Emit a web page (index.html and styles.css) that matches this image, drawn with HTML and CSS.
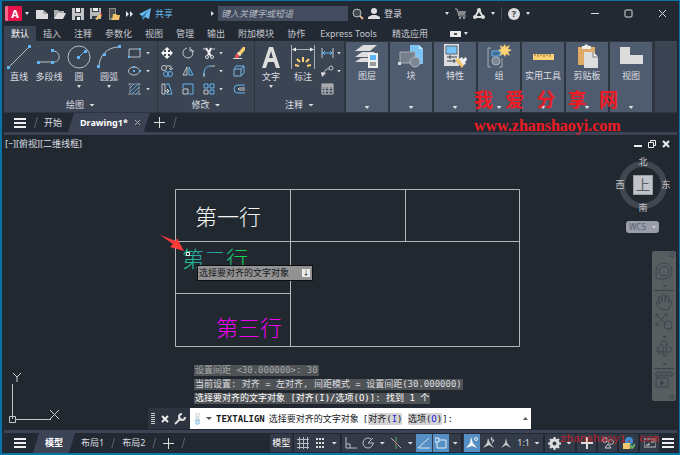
FILE: index.html
```html
<!DOCTYPE html>
<html lang="zh-CN">
<head>
    <meta charset="UTF-8">
    <meta name="viewport" content="width=device-width, initial-scale=1.0">
    <title>Drawing1</title>
    <link rel="stylesheet" href="styles.css">
</head>
<body>
    <header class="titlebar">
        <div class="quick">
            <button class="app" aria-label="A"><span class="logo">A</span><i class="caret"></i></button>
            <button aria-label="新建"><svg width="12" height="12" viewBox="0 0 12 12"><path d="M0 2h7l5 4v5H0z" fill="#dcdcdc"/><path d="M7 2v4h5" fill="#aaa"/></svg></button>
            <button aria-label="打开"><svg width="12" height="12" viewBox="0 0 12 12"><path d="M0 11V2h4l1 1h5v2H3z" fill="#aaa"/><path d="M3 5h9l-3 6H0z" fill="#dcdcdc"/></svg></button>
            <button aria-label="保存"><svg width="12" height="12" viewBox="0 0 12 12"><path d="M0 0h12v12H0z" fill="#c4c4c4"/><path d="M3 0h6v5H3zM3 8h6v4H3z" fill="#35404e"/><path d="M4 0h4v4H4zM5 9h3v3H5z" fill="#eee"/></svg></button>
            <button aria-label="另存为"><svg width="12" height="12" viewBox="0 0 12 12"><path d="M0 0h11v11H0z" fill="#b9b9b9"/><path d="M2 0h7v4H2zM2 8h5v3H2z" fill="#35404e"/><path d="M3 0h5v3H3z" fill="#eee"/><path d="M5 11l5-5 2 2-5 4z" fill="#f3c36b"/><path d="M10 6l1-1 1 1v2z" fill="#e24b4b"/></svg></button>
            <button aria-label="移动"><svg width="12" height="12" viewBox="0 0 12 12"><path d="M1 0h7v12H1z" fill="#8b8b85"/><path d="M2 1h5v9H2z" fill="#4b4f50"/><path d="M5 6h3l1 1h3l-1 5H4z" fill="#f3c36b"/></svg></button>
            <button aria-label="更多"><svg width="7" height="6" viewBox="0 0 7 6"><path d="M0 0l3 3-3 3zM4 0l3 3-3 3z" fill="#e8e8e8"/></svg></button>
            <button class="share"><svg width="12" height="12" viewBox="0 0 12 12"><path d="M0 6L12 0l-2 11-4-2-2 3-1-4z" fill="#69bdf0"/><path d="M3 8l7-6-5 7-1 3z" fill="#28729f"/></svg>共享</button>
        </div>
        <form class="search">
            <i class="caret right"></i>
            <input type="text" placeholder="键入关键字或短语" aria-label="键入关键字或短语">
            <button type="button" aria-label="搜索"><svg width="12" height="12" viewBox="0 0 12 12"><circle cx="5" cy="5" r="4" fill="#454b52" stroke="#bbb"/><path d="M8 8l3 3" stroke="#ddb883" stroke-width="2"/></svg></button>
        </form>
        <button class="login"><svg width="12" height="12" viewBox="0 0 12 12"><circle cx="6" cy="3" r="3" fill="#ddd"/><path d="M0 11V9l4-2h4l4 2v2z" fill="#ddd"/></svg>登录</button>
        <div class="account">
            <i class="caret"></i>
            <button aria-label="商店"><svg width="12" height="12" viewBox="0 0 12 12"><path d="M0 1h2l2 7h7" fill="none" stroke="#aaa"/><path d="M3 3h8l-1 4H4z" fill="#888"/><circle cx="5" cy="10" r="1" fill="#bbb"/><circle cx="9" cy="10" r="1" fill="#bbb"/></svg></button>
            <button aria-label="应用"><svg width="12" height="12" viewBox="0 0 12 12"><path d="M6 2L2 9h8z" fill="none" stroke="#ddd" stroke-width="2"/><circle cx="6" cy="2" r="2" fill="#ddd"/><circle cx="2" cy="9" r="2" fill="#ddd"/><circle cx="10" cy="9" r="2" fill="#ddd"/></svg></button>
            <i class="caret"></i>
            <span class="divider"></span>
            <button class="help" aria-label="帮助">?</button>
            <i class="caret"></i>
        </div>
        <div class="window">
            <button aria-label="最小化"><svg width="9" height="9" viewBox="0 0 9 9"><path d="M1 4.500h8" stroke="#ddd"/></svg></button>
            <button aria-label="最大化"><svg width="9" height="9" viewBox="0 0 9 9"><rect x="1" y="1" width="7" height="7" rx="1" fill="none" stroke="#ddd"/></svg></button>
            <button aria-label="关闭"><svg width="9" height="9" viewBox="0 0 9 9"><path d="M1 1l7 7M8 1L1 8" stroke="#ddd"/></svg></button>
        </div>
    </header>

    <nav class="menu">
        <a href="#" class="active">默认</a>
        <a href="#">插入</a>
        <a href="#">注释</a>
        <a href="#">参数化</a>
        <a href="#">视图</a>
        <a href="#">管理</a>
        <a href="#">输出</a>
        <a href="#">附加模块</a>
        <a href="#">协作</a>
        <a href="#" class="express">Express Tools</a>
        <a href="#">精选应用</a>
        <button class="toggle" aria-label="最小化功能区"><span></span><i class="caret"></i></button>
    </nav>

    <section class="ribbon">
        <div class="panel draw">
            <div class="tools">
                <button class="tool"><svg width="24" height="24" viewBox="0 0 24 24"><path d="M2 22L22 2" stroke="#b9bec5"/><path d="M0 21h3v3H0zM21 0h3v3h-3z" fill="#62b6f0"/></svg>直线</button>
                <button class="tool"><svg width="24" height="24" viewBox="0 0 24 24"><path d="M1 17h16c7 0 7-11-1-11" fill="none" stroke="#b9bec5"/><path d="M0 16h3v3H0zM14 4h3v3h-3zM14 16h3v3h-3z" fill="#62b6f0"/></svg>多段线</button>
                <button class="tool"><svg width="24" height="24" viewBox="0 0 24 24"><circle cx="12" cy="12" r="11" fill="none" stroke="#b9bec5"/><path d="M12 12l6-6" stroke="#62b6f0"/><path d="M10 11h3v3h-3zM17 5h3v3h-3z" fill="#62b6f0"/></svg>圆<i class="caret"></i></button>
                <button class="tool"><svg width="24" height="24" viewBox="0 0 24 24"><path d="M2 22C2 11 10 2 22 2" fill="none" stroke="#b9bec5"/><path d="M0 20h3v3H0zM6 8h3v3H6zM21 0h3v3h-3z" fill="#62b6f0"/></svg>圆弧<i class="caret"></i></button>
                <div class="small pairs">
                    <button aria-label="矩形"><svg width="13" height="12" viewBox="0 0 13 12"><path d="M1 2h11v8H1z" fill="none" stroke="#b9bec5"/><path d="M0 9h2v2H0zM11 1h2v2h-2z" fill="#62b6f0"/></svg></button><i class="caret"></i>
                    <button aria-label="椭圆"><svg width="13" height="12" viewBox="0 0 13 12"><ellipse cx="6" cy="6" rx="5.500" ry="4" fill="none" stroke="#b9bec5"/><path d="M5 5h2v2H5zM5 1h2v2H5zM11 5h2v2h-2z" fill="#62b6f0"/></svg></button><i class="caret"></i>
                    <button aria-label="填充"><svg width="13" height="12" viewBox="0 0 13 12"><path d="M2 0v12M11 0v12M0 1h13M0 11h13" stroke="#858c96"/><path d="M2 5l4-4M2 9l8-8M4 11l7-7M8 11l3-3" stroke="#62a6dc"/></svg></button><i class="caret"></i>
                </div>
            </div>
            <button class="name">绘图<i class="caret wide"></i></button>
        </div>
        <div class="panel modify">
            <div class="tools">
                <div class="small grid">
                    <button aria-label="移动"><svg width="12" height="12" viewBox="0 0 12 12"><path d="M6 0l3 3H7v2h2V3l3 3-3 3V7H7v2h2l-3 3-3-3h2V7H3v2L0 6l3-3v2h2V3H3z" fill="#f2f2f2"/></svg></button>
                    <button aria-label="旋转"><svg width="12" height="12" viewBox="0 0 12 12"><path d="M9 2a5 5 0 1 1-4-1" fill="none" stroke="#c3c7cc"/><path d="M8 0v4h4" fill="none" stroke="#c3c7cc"/></svg></button>
                    <button aria-label="修剪"><svg width="12" height="12" viewBox="0 0 12 12"><path d="M0 2h3M8 2h4" stroke="#c3c7cc"/><path d="M3 1l5 8M8 1L5 8" stroke="#eee" stroke-width="2"/><circle cx="4" cy="10" r="1.500" fill="none" stroke="#ddd"/><circle cx="9" cy="10" r="1.500" fill="none" stroke="#ddd"/></svg></button><i class="caret"></i>
                    <button aria-label="删除"><svg width="12" height="12" viewBox="0 0 12 12"><path d="M4 7l6-7h2v3L7 9z" fill="#fbcf6d"/><path d="M4 6l3 3-2 2H2V9z" fill="#e45151"/><path d="M4 6l3 3 1-1-3-3z" fill="#eee"/><path d="M0 11.500h9" stroke="#ddd"/></svg></button>
                    <button aria-label="复制"><svg width="12" height="12" viewBox="0 0 12 12"><circle cx="3" cy="3" r="2.500" fill="none" stroke="#c3c7cc"/><path d="M5 1h5v3M8 3l2 2 2-2" fill="none" stroke="#c3c7cc"/><circle cx="5" cy="9" r="2.500" fill="none" stroke="#62b6f0"/><circle cx="9" cy="9" r="2.500" fill="none" stroke="#62b6f0"/></svg></button>
                    <button aria-label="镜像"><svg width="12" height="12" viewBox="0 0 12 12"><path d="M5 2v8H1z" fill="none" stroke="#c3c7cc"/><path d="M7 2v8h4z" fill="none" stroke="#62b6f0"/></svg></button>
                    <button aria-label="圆角"><svg width="12" height="12" viewBox="0 0 12 12"><path d="M1 11V7q1-6 7-6" fill="none" stroke="#62b6f0"/><path d="M8 1h4M1 8v4" stroke="#c3c7cc"/></svg></button><i class="caret"></i>
                    <button aria-label="分解"><svg width="12" height="12" viewBox="0 0 12 12"><path d="M1 4l2-3h8v7l-3 3" fill="none" stroke="#62b6f0"/><path d="M8 4l3-3M1 4h7v7H1z" fill="none" stroke="#80b9df"/></svg></button>
                    <button aria-label="拉伸"><svg width="12" height="12" viewBox="0 0 12 12"><path d="M1 1h3v10H1z" fill="none" stroke="#c3c7cc"/><path d="M5 1h3l3 10H5" fill="none" stroke="#62b6f0"/><path d="M4 8h4M6 6l2 2-2 2" fill="none" stroke="#ddd"/></svg></button>
                    <button aria-label="缩放"><svg width="12" height="12" viewBox="0 0 12 12"><path d="M1 5V1h10v10H7" fill="none" stroke="#62b6f0"/><path d="M1 6h5v5H1z" fill="none" stroke="#c3c7cc"/></svg></button>
                    <button aria-label="阵列"><svg width="12" height="12" viewBox="0 0 12 12"><path d="M1 1h4v4H1zM7 1h4v4H7zM7 7h4v4H7z" fill="none" stroke="#62b6f0"/><path d="M1 7h4v4H1z" fill="none" stroke="#c3c7cc"/></svg></button><i class="caret"></i>
                    <button aria-label="偏移"><svg width="12" height="12" viewBox="0 0 12 12"><path d="M12 2H5a4 4 0 0 0 0 8h7" fill="none" stroke="#62b6f0"/><path d="M12 5H6q-2 1 0 2h6" fill="none" stroke="#c3c7cc"/></svg></button>
                </div>
            </div>
            <button class="name">修改<i class="caret wide"></i></button>
        </div>
        <div class="panel annotate">
            <div class="tools">
                <button class="tool"><svg width="24" height="24" viewBox="0 0 24 24"><path d="M3 23L10 2h4l7 21h-4l-2-6H9l-2 6zM10 13h4l-2-7z" fill="#dedede"/></svg>文字<i class="caret"></i></button>
                <button class="tool"><svg width="24" height="24" viewBox="0 0 24 24"><path d="M.5 0v24M23.500 0v24M2 4.500h20" stroke="#a9aeb6"/><path d="M1 4.500l4-2v4zM23 4.500l-4-2v4z" fill="#eee"/><path d="M12 12v5M6 14l3 3M18 14l-3 3M4 20l4 1M20 20l-4 1" stroke="#fbcf6d" stroke-width="2"/></svg>标注</button>
                <div class="small pairs">
                    <button aria-label="线性"><svg width="13" height="12" viewBox="0 0 13 12"><path d="M1 1v10M12 1v10" stroke="#c3c7cc"/><path d="M1 6h11M4 4L2 6l2 2M9 4l2 2-2 2" fill="none" stroke="#62b6f0"/></svg></button><i class="caret"></i>
                    <button aria-label="引线"><svg width="13" height="12" viewBox="0 0 13 12"><circle cx="10" cy="3" r="2" fill="none" stroke="#c3c7cc"/><path d="M8 4Q4 3 3 9" fill="none" stroke="#c3c7cc"/><path d="M0 7l5 1-4 4z" fill="#ddd"/></svg></button><i class="caret"></i>
                    <button aria-label="表格"><svg width="13" height="12" viewBox="0 0 13 12"><path d="M1 1h11v10H1zM1 5h11M1 8h11M4 4v7M8 4v7" fill="none" stroke="#c3c7cc"/><path d="M1 1h11v3H1z" fill="#aaa"/></svg></button>
                </div>
            </div>
            <button class="name">注释<i class="caret wide"></i></button>
        </div>
        <div class="tiles">
            <button class="tile"><svg width="26" height="24" viewBox="0 0 26 24"><path d="M9 1h14l-7 6H1zM8 8h13l-6 5H1zM7 14h12l-4 4H1z" fill="#ddd"/><path d="M8 8l1-1M7 14l1-1" stroke="#38404c"/><path d="M14 9h10v15H14z" fill="#eee"/><path d="M16 11h6v5h-6z" fill="#59b9f6"/><path d="M16 19h6M16 21h6" stroke="#444"/></svg>图层<i class="caret"></i></button>
            <button class="tile"><svg width="26" height="24" viewBox="0 0 26 24"><path d="M12 1h9l4 4v15H12z" fill="#7bc4f4"/><path d="M21 1v4h4" fill="#c6e8fc"/><path d="M2 8h15v11H2z" fill="#747f8e" stroke="#a4abb4"/><circle cx="17" cy="18" r="5" fill="#7c8795" stroke="#b0b5bc"/><path d="M0 18h3v3H0z" fill="#ddd"/></svg>块<i class="caret"></i></button>
            <button class="tile"><svg width="26" height="24" viewBox="0 0 26 24"><path d="M2 0h15v22H2z" fill="#ddd"/><path d="M4 2h11v8H4z" fill="#78c4f6" stroke="#58636f"/><path d="M5 13h10M5 17h10M8 11v4M12 15v4" stroke="#38404c"/><path d="M13 16l4-2 5 7-2 3z" fill="#f4c76a"/><path d="M17 15l3-2 1 2 3-2 1 3-2 2 1 2-3 1z" fill="#eee"/></svg>特性<i class="caret"></i></button>
            <button class="tile"><svg width="26" height="24" viewBox="0 0 26 24"><path d="M5 4H2v19h3M13 23h3V14" fill="none" stroke="#a4abb4"/><path d="M6 7h8v5H6z" fill="#406b90" stroke="#62b6f0"/><circle cx="10" cy="17" r="4" fill="#7c8795" stroke="#b0b5bc"/><path d="M19 0l1 3 4-2-2 4 4 1-4 2 2 4-4-2-1 3-2-3-3 2 1-4-3-2 3-1-1-4 3 2z" fill="#fbd276"/></svg>组<i class="caret"></i></button>
            <button class="tile"><svg width="26" height="24" viewBox="0 0 26 24"><path d="M3 10h21v6H3z" fill="#fbd276"/><path d="M5 10v2M8 10v3M11 10v2M14 10v3M17 10v2M20 10v3" stroke="#8c6c3a"/></svg>实用工具<i class="caret"></i></button>
            <button class="tile"><svg width="26" height="24" viewBox="0 0 26 24"><path d="M4 3h17v18H4z" fill="#dfaa65"/><path d="M8 5V2h2l2-2 3 2h2v3z" fill="#eee"/><path d="M10 8h9l5 5v11H10z" fill="#ddd"/><path d="M19 8v5h5" fill="#f6f6f6" stroke="#7b7b7b"/></svg>剪贴板<i class="caret"></i></button>
            <button class="tile"><svg width="26" height="24" viewBox="0 0 26 24"><path d="M2 3h10v8h13v9H2z" fill="#dcdcdc"/></svg>视图<i class="caret"></i></button>
        </div>
        <div class="watermark">
            <div class="mark"><span>我</span><span>爱</span><span>分</span><span>享</span><span>网</span></div>
            <div class="site">www.zhanshaoyi.com</div>
        </div>
    </section>

    <nav class="tabs files">
        <button class="bars" aria-label="菜单"></button>
        <span class="slash"></span>
        <a href="#">开始</a>
        <a href="#" class="current">Drawing1* <svg width="7" height="7" viewBox="0 0 7 7"><path d="M1 1l5 5M6 1L1 6" stroke="#aaa" stroke-width="1"/></svg></a>
        <button class="plus" aria-label="新图形"></button>
        <span class="slash"></span>
    </nav>

    <main class="canvas">
        <div class="view-head">
            <span>[−][俯视][二维线框]</span>
            <div class="view-buttons">
                <button aria-label="最小化"><svg width="8" height="8" viewBox="0 0 8 8"><path d="M0 6h8" stroke="#eee" stroke-width="2"/></svg></button>
                <button aria-label="还原"><svg width="8" height="8" viewBox="0 0 8 8"><path d="M.5 2.500h5v5h-5zM2.500 2V.5h5v5H6" fill="none" stroke="#eee"/></svg></button>
                <button aria-label="关闭"><svg width="8" height="8" viewBox="0 0 8 8"><path d="M1 1l6 6M7 1L1 7" stroke="#eee" stroke-width="2"/></svg></button>
            </div>
        </div>

        <svg class="drawing" width="361" height="160" viewBox="0 0 361 160">
            <defs>
                <linearGradient id="picked" x1="0" y1="0" x2="1" y2="0">
                    <stop offset="0" stop-color="#1fd088"/>
                    <stop offset=".4" stop-color="#2f92b8"/>
                    <stop offset="1" stop-color="#10e040"/>
                </linearGradient>
            </defs>
            <path d="M15.500 1.500h344v157h-344zM15.500 53.500h344M130.500 1.500v157M245.500 1.500v52M15.500 105.500h115" fill="none" stroke="#b4b7bb"/>
            <text x="35" y="37" fill="#f4f4f4">第一行</text>
            <text x="22" y="79" fill="url(#picked)">第二行</text>
            <text x="56" y="148" fill="#f000f0">第三行</text>
            <path d="M0 47l16 6 1-3 7 13-14-4 3-3z" fill="#fb3a3a"/>
            <path d="M26.500 64.500h3v3h-3z" fill="#212830" stroke="#f4f4f4"/>
        </svg>
        <div class="tip">选择要对齐的文字对象<span class="tip-key">↓</span></div>

        <svg class="ucs" width="56" height="54" viewBox="0 0 56 54">
            <path d="M5.500 11v35M8 46.500h36M2.500 43.500h6v6h-6z" fill="none" stroke="#c5c8cb"/>
            <path d="M6 0l4 4 4-4M10 4v5M43 37l9 9M52 37l-9 9" fill="none" stroke="#d0d2d4"/>
        </svg>

        <div class="compass">
            <span class="north">北</span>
            <span class="west">西</span>
            <span class="top">上</span>
            <span class="east">东</span>
            <span class="south">南</span>
        </div>
        <button class="wcs">WCS <i class="caret"></i></button>
        <div class="navbar">
            <svg width="24" height="150" viewBox="0 0 24 150" fill="none" stroke="#3c454e">
                <circle cx="20" cy="4" r="2"/>
                <path d="M4 20a8 8 0 1 1 8 8H6q-2 0-2-2zM2 39.500h20M2 117.500h20"/>
                <circle cx="12" cy="20" r="5"/>
                <path d="M8 58l-4-6q0-3 3 0l1 1-2-7q1-2 3 1l1 4v-7q2-2 3 0v7l2-6q2-1 2 1l-1 6 2-3q2 0 2 2l-4 8z"/>
                <path d="M4 63l11 11M15 63L4 74M4 66v-3h3M12 63h3v3M4 71v3h3"/>
                <circle cx="16" cy="74" r="4"/><path d="M18 77l3 3"/>
                <path d="M11 105V94H8l4-5 4 5h-2v11zM8 96q-7 2-2 5h12q5-3-2-5M6 98l3 3-3 3"/>
                <path d="M4 121h4v4H4zM10 121h4v4h-4zM16 121h4v4h-4zM4 127h12v9H4z"/>
                <path d="M8 129l5 3-5 3zM10 34h5l-2 2zM10 85h5l-2 2zM10 112h5l-2 2z" fill="#3c454e" stroke="none"/>
                <circle cx="20" cy="146" r="2"/>
            </svg>
        </div>

        <div class="command">
            <div class="history">
                <p class="old">设置间距 &lt;30.000000&gt;: 30</p>
                <p>当前设置: 对齐 = 左对齐, 间距模式 = 设置间距(30.000000)</p>
                <p class="last">选择要对齐的文字对象 [对齐(I)/选项(O)]: 找到 1 个</p>
            </div>
            <div class="prompt">
                <div class="prompt-tools">
                    <span class="grip"></span>
                    <button aria-label="关闭"><svg width="8" height="8" viewBox="0 0 8 8"><path d="M1 1l6 6M7 1L1 7" stroke="#eee" stroke-width="2"/></svg></button>
                    <button aria-label="自定义"><svg width="12" height="12" viewBox="0 0 12 12"><path d="M1 11l6-6" stroke="#ddd" stroke-width="2"/><path d="M8 1a3 3 0 1 0 3 3" fill="none" stroke="#ddd" stroke-width="2"/></svg></button>
                </div>
                <div class="line">
                    <svg width="8" height="12" viewBox="0 0 8 12"><path d="M2 0h3v4H2zM2 5h3v3H2z" fill="none" stroke="#ccd4da"/><path d="M2 7h3v4H2z" fill="none" stroke="#76bdea"/></svg>
                    <i class="caret wide"></i>
                    <b>TEXTALIGN</b>
                    <span>选择要对齐的文字对象</span>
                    <span>[<button>对齐(<em>I</em>)</button> <button>选项(<em>O</em>)</button>]:</span>
                    <i class="caret up"></i>
                </div>
            </div>
        </div>
    </main>

    <footer class="tabs status">
        <button class="bars" aria-label="菜单"></button>
        <a href="#" class="current">模型</a>
        <a href="#">布局1</a>
        <span class="slash"></span>
        <a href="#">布局2</a>
        <span class="slash"></span>
        <button class="plus" aria-label="新布局"></button>
        <span class="slash"></span>
        <div class="modes">
            <button class="model">模型</button>
            <div class="group">
                <button aria-label="栅格"><svg width="12" height="12" viewBox="0 0 12 12"><path d="M2.500 0v12M6.500 0v12M10.500 0v12M0 2.500h12M0 6.500h12M0 10.500h12" stroke="#b9bec5"/></svg></button>
                <button aria-label="捕捉"><svg width="12" height="12" viewBox="0 0 12 12"><path d="M2 2h9M2 6h9M2 10h9" stroke="#ddd" stroke-width="2" stroke-dasharray="2 1"/></svg></button>
                <i class="caret wide"></i>
            </div>
            <div class="group">
                <button aria-label="正交"><svg width="12" height="12" viewBox="0 0 12 12"><path d="M1 0v11h11M1 7h4v4" fill="none" stroke="#b9bec5"/></svg></button>
                <button aria-label="极轴"><svg width="12" height="12" viewBox="0 0 12 12"><path d="M11 6a5 5 0 1 1-2-4M6 6h6M6 6l5-5" fill="none" stroke="#b9bec5"/></svg></button>
                <i class="caret wide"></i>
                <button aria-label="等轴测"><svg width="12" height="12" viewBox="0 0 12 12"><path d="M6 0v12" stroke="#4fa167"/><path d="M1 1l4 4M8 8l3 3" stroke="#bbb"/><path d="M4 4l4 4" stroke="#d66"/></svg></button>
                <i class="caret wide"></i>
                <button class="on" aria-label="捕捉追踪"><svg width="12" height="12" viewBox="0 0 12 12"><path d="M0 11L11 1M1 11h11" stroke="#d8e9f8"/></svg></button>
                <button class="on" aria-label="对象捕捉"><svg width="12" height="12" viewBox="0 0 12 12"><path d="M2 3h9v8H2z" fill="none" stroke="#e4eef7"/><path d="M0 1h4v4H0z" fill="#5a9bd3" stroke="#e4eef7"/></svg></button>
                <i class="caret wide"></i>
            </div>
            <div class="group">
                <button class="on" aria-label="注释可见性"><svg width="12" height="12" viewBox="0 0 12 12"><path d="M5 0l2 6 4 5-5-2-6 2 4-5z" fill="#f3f3f3"/><circle cx="10" cy="2" r="1.500" fill="none" stroke="#eee"/></svg></button>
                <button aria-label="自动缩放"><svg width="12" height="12" viewBox="0 0 12 12"><path d="M5 1l2 5 4 5-5-3-6 3 4-5z" fill="#d0d2d4"/><path d="M9 0l-1 3h3l-2 3" fill="none" stroke="#ddd"/></svg></button>
                <button aria-label="注释比例"><svg width="12" height="12" viewBox="0 0 12 12"><path d="M6 1l1 5 4 5-5-3-5 3 4-5z" fill="#d0d2d4"/></svg></button>
                <button class="scale">1:1 <i class="caret wide"></i></button>
            </div>
            <div class="group">
                <button aria-label="设置"><svg width="13" height="13" viewBox="0 0 13 13"><circle cx="6.500" cy="6.500" r="3.500" fill="none" stroke="#ddd" stroke-width="3"/><path d="M6.500 0v3M6.500 10v3M0 6.500h3M10 6.500h3M2 2l2 2M9 9l2 2M11 2L9 4M4 9l-2 2" stroke="#ddd" stroke-width="2"/></svg></button>
                <i class="caret wide"></i>
            </div>
            <button class="cell" aria-label="注释监视器"><svg width="12" height="12" viewBox="0 0 12 12"><path d="M6 0v12M0 6h12" stroke="#ddd" stroke-width="2"/></svg></button>
            <button class="cell" aria-label="隔离"><svg width="12" height="12" viewBox="0 0 12 12"><path d="M1 1h4v4H1zM6 7l3 4H3z" fill="none" stroke="#ccc"/><circle cx="9" cy="5" r="2.500" fill="none" stroke="#aaa"/></svg></button>
            <button class="cell" aria-label="硬件加速"><svg width="12" height="12" viewBox="0 0 12 12"><circle cx="6" cy="4" r="4" fill="#3f8fd0"/><path d="M0 6h7v6H0z" fill="#f4c76a"/><path d="M7 8l2 3 3-4" fill="none" stroke="#64b96a" stroke-width="2"/></svg></button>
            <button class="cell" aria-label="全屏"><svg width="12" height="12" viewBox="0 0 12 12"><path d="M0 2h12v8H0z" fill="none" stroke="#bbb"/><path d="M7 5h3V3M2 8h3V6" fill="none" stroke="#ddd"/></svg></button>
            <button class="bars" aria-label="自定义"></button>
        </div>
        <div class="stamp">zhanshaoyi. com</div>
    </footer>
</body>
</html>
```
FILE: styles.css
```css
* {
    box-sizing: border-box;
}
body {
    margin: 0;
    min-height: 100vh;
    display: flex;
    flex-direction: column;
    border: 1px solid #0a73a8;
    border-left-width: 2px;
    border-bottom-width: 2px;
    background-color: #222933;
    color: #dcdee1;
    font-family: "Noto Sans", "Noto Sans CJK SC", sans-serif;
    font-size: 9px;
    line-height: 12px;
}
button, input {
    font: inherit;
    color: inherit;
    background: none;
    border: none;
    padding: 0;
    margin: 0;
}
a {
    color: inherit;
    text-decoration: none;
}
svg {
    display: block;
    flex-shrink: 0;
}
.caret {
    flex-shrink: 0;
    width: 4px;
    height: 3px;
    background-color: #dddddd;
    clip-path: polygon(0 0, 100% 0, 50% 100%);
}
.caret.wide {
    width: 6px;
}
.caret.up {
    width: 5px;
    margin-left: auto;
    clip-path: polygon(50% 0, 100% 100%, 0 100%);
}
.caret.right {
    width: 3px;
    height: 5px;
    clip-path: polygon(0 0, 100% 50%, 0 100%);
}

/* title bar */
.titlebar {
    display: flex;
    align-items: center;
    height: 25px;
    padding-left: 3px;
}
.titlebar button {
    display: flex;
    align-items: center;
}
.quick {
    display: flex;
    align-items: center;
    gap: 6px;
    width: 206px;
}
.app {
    gap: 3px;
    margin-right: 1px;
}
.logo {
    width: 17px;
    height: 15px;
    background-color: #e8134a;
    border-left: 3px solid #f4688a;
    border-radius: 1px;
    color: #ffffff;
    font-size: 11px;
    font-weight: bold;
    line-height: 15px;
    text-align: center;
}
.share {
    gap: 4px;
    color: #69bdf0;
}
.search {
    display: flex;
    align-items: center;
    gap: 4px;
}
.search input {
    width: 130px;
    height: 15px;
    padding: 0 3px;
    background-color: #434c5e;
    font-style: italic;
}
.search input::placeholder {
    color: #b5b9c0;
}
.login {
    gap: 4px;
    margin-left: 4px;
}
.account {
    display: flex;
    align-items: center;
    gap: 6px;
    margin-left: auto;
}
.divider {
    width: 1px;
    height: 13px;
    background-color: #454d59;
}
.titlebar .help {
    justify-content: center;
    width: 12px;
    height: 12px;
    border-radius: 50%;
    background-color: #dddddd;
    color: #333a44;
    font-weight: bold;
}
.window {
    display: flex;
    margin-left: 47px;
}
.titlebar .window button {
    justify-content: center;
    width: 34px;
    height: 24px;
}

/* ribbon */
.menu {
    display: flex;
    padding-left: 2px;
    height: 15px;
    line-height: 15px;
    gap: 13px;
    color: #c3c6cb;
}
.menu .active {
    padding: 0 7px;
    margin-right: -6px;
    background-color: #3b4453;
    color: #ffffff;
}
.express {
    padding: 0 2px;
}
.toggle {
    display: flex;
    align-items: center;
    gap: 3px;
    margin-left: 9px;
}
.toggle span {
    width: 11px;
    height: 6px;
    border: 2px solid #e8e8e8;
    border-width: 2px 4px;
    background-color: #555555;
}
.ribbon {
    position: relative;
    display: flex;
    gap: 1px;
    margin: 0 2px;
    height: 72px;
    border-bottom: 1px solid #2d3541;
    background-color: #2d3541;
}
.panel {
    display: flex;
    flex-direction: column;
    background-color: #3b4453;
}
.draw {
    width: 153px;
}
.modify {
    width: 96px;
}
.annotate {
    width: 89px;
}
.tools {
    display: flex;
    height: 57px;
    padding-top: 3px;
}
.tool {
    display: flex;
    flex-direction: column;
    align-items: center;
    width: 30px;
    padding-top: 1px;
    white-space: nowrap;
}
.tool svg {
    margin-bottom: 2px;
}
.tool .caret {
    margin-top: 2px;
}
.small {
    display: grid;
    grid-auto-rows: 18px;
    align-content: start;
    align-items: center;
}
.pairs {
    grid-template-columns: 18px 4px;
    margin-left: 4px;
}
.grid {
    grid-template-columns: 21px 21px 16px 14px 12px;
    padding-left: 3px;
}
.annotate .tool {
    width: 32px;
}
.annotate .pairs {
    margin-left: 2px;
    grid-template-columns: 16px 4px;
}
.name {
    display: flex;
    justify-content: center;
    align-items: center;
    gap: 5px;
    height: 14px;
}
.tiles {
    display: flex;
    flex: 1;
    gap: 2px;
    margin-left: 1px;
    padding-top: 1px;
    background: linear-gradient(to right, #2d3541 309px, #3b4453 309px);
}
.tile {
    display: flex;
    flex-direction: column;
    align-items: center;
    width: 42px;
    padding: 2px 0 3px;
    background-color: #4f5b6e;
    white-space: nowrap;
}
.tile svg {
    margin-bottom: 2px;
}
.tile .caret {
    margin-top: auto;
    width: 5px;
}
.watermark {
    position: absolute;
    top: 47px;
    left: 470px;
    width: 144px;
    color: #ed1c24;
    font-weight: bold;
}
.mark {
    display: flex;
    justify-content: space-between;
    font-size: 19px;
    line-height: 24px;
}
.site {
    padding-top: 4px;
    font-family: "Liberation Serif", serif;
    font-size: 16px;
    line-height: 20px;
}

/* tab strips above and below the drawing */
.tabs {
    display: flex;
    align-items: center;
    background-color: #222933;
}
.files {
    height: 22px;
    margin: 0 2px;
    padding-left: 10px;
    border-bottom: 3px solid #3b4354;
}
.bars {
    flex-shrink: 0;
    width: 12px;
    height: 10px;
    background: linear-gradient(#eeeeee 2px, transparent 2px, transparent 4px, #eeeeee 4px, #eeeeee 6px, transparent 6px, transparent 8px, #eeeeee 8px);
}
.slash {
    width: 4px;
    height: 11px;
    margin: 0 8px;
    background-color: #59616d;
    clip-path: polygon(75% 0, 100% 0, 25% 100%, 0 100%);
}
.files .slash {
    margin: 0 6px 0 8px;
}
.current {
    display: flex;
    align-items: center;
    align-self: stretch;
    gap: 6px;
    padding: 0 9px 0 12px;
    background-color: #3b4354;
    clip-path: polygon(6px 0, 100% 0, calc(100% - 6px) 100%, 0 100%);
    color: #ffffff;
    font-weight: bold;
}
.files .current {
    margin-left: 6px;
}
.plus {
    width: 11px;
    height: 11px;
    background: linear-gradient(#dddddd, #dddddd) center / 11px 1px no-repeat, linear-gradient(#dddddd, #dddddd) center / 1px 11px no-repeat;
}
.files .plus {
    margin-left: 4px;
}

/* drawing area */
.canvas {
    position: relative;
    flex: 1;
    min-height: 293px;
    background-color: #212830;
}
.view-head {
    display: flex;
    justify-content: space-between;
    padding: 3px 9px 0 3px;
}
.view-buttons {
    display: flex;
    align-items: center;
    gap: 6px;
}
.drawing {
    position: absolute;
    top: 53px;
    left: 158px;
}
.drawing text {
    font-family: "Noto Sans CJK SC", sans-serif;
    font-size: 22px;
    font-weight: 300;
}
.tip {
    position: absolute;
    top: 130px;
    left: 195px;
    display: flex;
    align-items: center;
    justify-content: space-between;
    width: 116px;
    height: 16px;
    padding: 0 2px 0 1px;
    border: 1px solid #0c0f12;
    background-color: #929292;
    color: #15181c;
}
.tip-key {
    width: 8px;
    height: 8px;
    background-color: #eeeeee;
    font-size: 7px;
    line-height: 7px;
    text-align: center;
}
.ucs {
    position: absolute;
    left: 5px;
    bottom: 3px;
}
.compass {
    position: absolute;
    top: 26px;
    right: 12px;
    display: grid;
    grid-template: "a n b" 12px "w t e" 24px "c s d" 12px / 12px 24px 12px;
    place-items: center;
    place-content: center;
    width: 48px;
    height: 48px;
    border: 6px solid #41474f;
    border-radius: 50%;
    color: #c3c6c9;
}
.north {
    grid-area: n;
    margin-top: -10px;
}
.south {
    grid-area: s;
    margin-bottom: -10px;
}
.west {
    grid-area: w;
    margin-left: -10px;
}
.east {
    grid-area: e;
    margin-right: -10px;
}
.top {
    grid-area: t;
    width: 20px;
    height: 20px;
    background-color: #c0c4c9;
    border: 1px solid #9a9fa5;
    color: #555b66;
    font-size: 14px;
    line-height: 18px;
    text-align: center;
}
.wcs {
    position: absolute;
    top: 86px;
    right: 20px;
    display: flex;
    align-items: center;
    justify-content: space-between;
    width: 33px;
    height: 12px;
    padding: 0 3px;
    border-radius: 3px;
    background-color: #9a9eaa;
    color: #5c616d;
    font-size: 8px;
}
.navbar {
    position: absolute;
    top: 116px;
    right: 3px;
    border-radius: 2px;
    background-color: #585d60;
}
.command {
    position: absolute;
    left: 146px;
    bottom: 1px;
    width: 383px;
    font-family: "DejaVu Sans Mono", "Noto Sans CJK SC", monospace;
    white-space: nowrap;
}
.history {
    display: flex;
    flex-direction: column;
    align-items: flex-start;
    gap: 3px;
    padding: 0 0 4px 46px;
}
.history p {
    margin: 0;
    height: 11px;
    padding: 0 1px;
    background-color: #505356;
    line-height: 11px;
}
.history .old {
    color: #a6a8aa;
}
.history .last {
    color: #ffffff;
}
.prompt {
    display: flex;
    height: 21px;
}
.prompt-tools {
    display: flex;
    align-items: center;
    justify-content: space-between;
    width: 42px;
    padding: 0 4px 0 3px;
    background-color: #2d3440;
}
.grip {
    width: 4px;
    height: 12px;
    background: repeating-linear-gradient(#cccccc 0 1px, transparent 1px 2px);
}
.line {
    display: flex;
    flex: 1;
    align-items: center;
    gap: 4px;
    padding: 0 3px 0 4px;
    background-color: #ffffff;
    color: #16191d;
}
.line .caret {
    background-color: #555555;
}
.line button {
    background-color: #d4d4d4;
    border-radius: 2px;
}
.line em {
    color: #2222dd;
    font-style: normal;
}

/* status bar */
.status {
    position: relative;
    height: 23px;
    margin: 0 2px;
    padding-left: 10px;
    border-top: 3px solid #3b4354;
}
.status .current {
    margin: 0 6px 0 7px;
    padding: 0 12px;
}
.status .slash {
    margin: 0 7px;
}
.modes {
    display: flex;
    gap: 2px;
    height: 18px;
    margin-left: auto;
    align-items: center;
}
.model, .group, .cell {
    display: flex;
    align-items: center;
    justify-content: center;
    height: 18px;
    background-color: #333b48;
}
.model {
    width: 22px;
    color: #ffffff;
}
.group {
    gap: 5px;
    padding: 0 3px;
}
.on {
    display: flex;
    align-items: center;
    justify-content: center;
    width: 16px;
    height: 18px;
    margin: 0 -2px;
    background-color: #568fc4;
}
.scale {
    display: flex;
    align-items: center;
    gap: 4px;
}
.cell {
    width: 19px;
}
.modes .bars {
    margin: 0 3px 0 1px;
}
.stamp {
    position: absolute;
    top: 0;
    right: 18px;
    color: #c0202a;
    font-family: "Liberation Mono", monospace;
    font-size: 11px;
    line-height: 12px;
}
```
